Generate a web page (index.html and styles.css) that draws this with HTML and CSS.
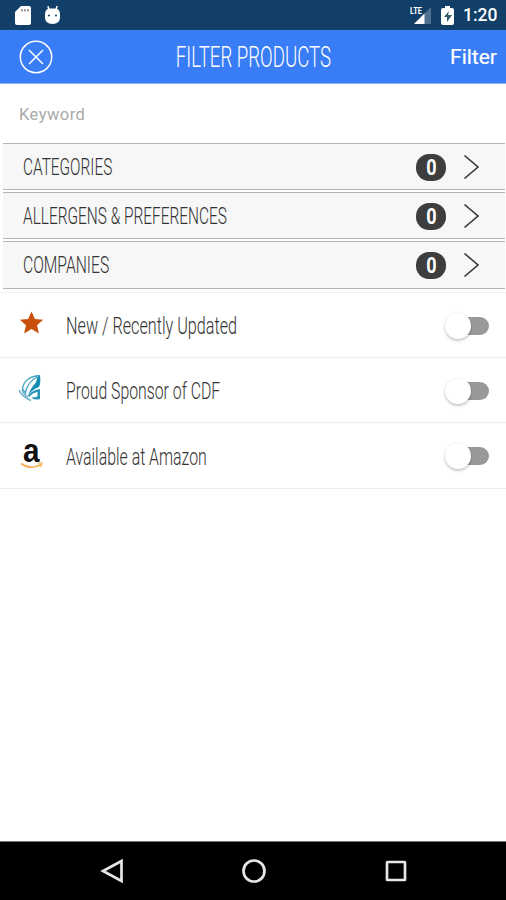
FILE: index.html
```html
<!DOCTYPE html>
<html lang="en">
<head>
<meta charset="utf-8">
<title>Filter Products</title>
<link rel="stylesheet" href="styles.css">
</head>
<body>
<div class="status">
  <svg class="sd" width="16" height="19" viewBox="0 0 16 19"><path d="M6 0h8q2 0 2 2v15q0 2-2 2H2q-2 0-2-2V6z" fill="#fff"/><path d="M7 3v2.500M10 3v2.500M13 3v2.500" stroke="#776f78" stroke-width="1.300"/></svg>
  <svg class="bot" width="17" height="19" viewBox="0 0 17 19"><path d="M4 0l1 4M13 0l-1 4" stroke="#fff" stroke-width="1.500"/><path d="M1 8.500q0-6 5-6h5q5 0 5 6v3q0 6.500-7.500 6.500T1 11.500z" fill="#fff"/><circle cx="5" cy="9.500" r="1" fill="#113f68"/><circle cx="12" cy="9.500" r="1" fill="#113f68"/></svg>
  <div class="signal"><span class="lte">LTE</span><svg width="24" height="19" viewBox="0 0 24 19"><path d="M6 18L23 1v17z" fill="#4e7190"/><path d="M6 18L16.500 7.500V18z" fill="#fff"/></svg></div>
  <svg class="battery" width="13" height="19" viewBox="0 0 13 19"><path d="M4 0h5v2h2q2 0 2 2v13q0 2-2 2H2q-2 0-2-2V4q0-2 2-2h2z" fill="#fff"/><path d="M8 5L3 11h3v5l5-7H7z" fill="#315b66"/></svg>
  <span class="clock">1:20</span>
</div>
<header class="header">
  <svg class="close" width="34" height="34" viewBox="0 0 34 34" fill="none" stroke="#fff"><circle cx="17" cy="17" r="15.700" stroke-width="1.500"/><path d="M10 10l14 14M24 10L10 24" stroke-width="1.500"/></svg>
  <h1 class="title">FILTER PRODUCTS</h1>
  <span class="apply">Filter</span>
</header>
<div class="keyword">Keyword</div>
<div class="sections">
  <div class="section"><span class="label categories">CATEGORIES</span><span class="badge"><b>0</b></span><svg class="chevron" width="17" height="26" viewBox="0 0 17 26"><path d="M1.500 1.500L15 13 1.500 24.500"/></svg></div>
  <div class="section"><span class="label allergens">ALLERGENS &amp; PREFERENCES</span><span class="badge"><b>0</b></span><svg class="chevron" width="17" height="26" viewBox="0 0 17 26"><path d="M1.500 1.500L15 13 1.500 24.500"/></svg></div>
  <div class="section"><span class="label companies">COMPANIES</span><span class="badge"><b>0</b></span><svg class="chevron" width="17" height="26" viewBox="0 0 17 26"><path d="M1.500 1.500L15 13 1.500 24.500"/></svg></div>
</div>
<div class="options">
  <div class="option">
    <svg class="icon" width="26" height="28" viewBox="0 0 26 28"><path d="M13.500 2.500l3.400 7.600 8.200.7-6.100 5.400 1.900 8.300-7.400-4.400-7.400 4.400 1.900-8.300L1.900 10.800l8.200-.7z" fill="#c8500a"/></svg>
    <span class="label recent">New / Recently Updated</span><span class="switch"></span>
  </div>
  <div class="option">
    <svg class="icon" width="26" height="28" viewBox="0 0 26 28" fill="none"><path d="M21.500 1.500C12 2 5 7 4.500 15l3 4C8.500 11 13 6 21.500 1.500z" stroke="#4ba6c6" stroke-width="1.400"/><path d="M22 1q1 8-1 12-6 2-11 8 2-5 5-9 4-4 4-8z" fill="#168eb5"/><path d="M10 21.500q4-5.500 12-6.500v10q-5 1.500-8-1l1-1q3 1 4.500-1v-4q-6 1-8 5z" fill="#2896b8"/><path d="M1 16q2 6 12 10.500M4 16q2 5 6 7" stroke="#67aec6" stroke-width="1.400"/></svg>
    <span class="label sponsor">Proud Sponsor of CDF</span><span class="switch"></span>
  </div>
  <div class="option">
    <div class="icon amazon"><b>a</b><svg width="24" height="8" viewBox="0 0 24 8"><path d="M1 1.500q10 7 20 1" fill="none" stroke="#f5ad4e" stroke-width="1.600"/><path d="M17.500 1h4.500l-1.500 4" fill="none" stroke="#f5ad4e" stroke-width="1.200"/></svg></div>
    <span class="label available">Available at Amazon</span><span class="switch"></span>
  </div>
</div>
<nav class="nav">
  <svg width="24" height="26" viewBox="0 0 24 26"><path d="M21.500 3v20L3 13z"/></svg>
  <svg width="26" height="26" viewBox="0 0 26 26"><circle cx="13" cy="13" r="10.500"/></svg>
  <svg width="24" height="24" viewBox="0 0 24 24"><rect x="3" y="3" width="18" height="18" rx="0.500"/></svg>
</nav>
</body>
</html>
```
FILE: styles.css
```css
* { box-sizing: border-box; }
body { margin: 0; width: 506px; height: 900px; display: flex; flex-direction: column; background: #fff; font-family: Roboto, sans-serif; overflow: hidden; }
svg { display: block; flex: none; }
.status { height: 30px; flex: none; display: flex; align-items: center; padding: 0 9px 0 15px; background: #113f68; color: #fff; }
.bot { margin-left: 13px; }
.signal { position: relative; margin-left: auto; margin-right: 9px; }
.lte { position: absolute; left: 2px; top: 0; font-size: 9.5px; line-height: 9px; font-weight: 700; transform: scaleX(.78); transform-origin: left; }
.clock { margin-left: 9px; font-size: 17.5px; font-weight: 500; line-height: 32px; width: 34px; white-space: nowrap; }
.header { height: 54px; flex: none; display: grid; grid-template-columns: 100px 1fr 100px; align-items: center; padding: 0 9px 0 19px; background: #397df6; border-bottom: 1px solid #8fb3fa; color: #fff; }
.title { margin: 0 9px 0 0; font-size: 29px; line-height: 53px; padding-top: 1px; font-weight: 300; text-align: center; white-space: nowrap; transform: scaleX(.643); }
.apply { font-size: 21px; font-weight: 400; -webkit-text-stroke: .2px #fff; text-align: right; line-height: 52px; }
.keyword { height: 59px; flex: none; padding-left: 19px; font-size: 16.5px; line-height: 62px; color: #aaa; letter-spacing: .45px; }
.sections { flex: none; height: 150px; padding: 0 1px 0 3px; border-bottom: 1px solid #f2f2f2; }
.section { height: 47px; margin-bottom: 2px; padding: 0 25px 0 20px; display: flex; align-items: center; background: #f7f7f7; border-top: 1px solid #b5b5b5; border-bottom: 1px solid #b5b5b5; }
.section:last-child { height: 48px; }
.label { flex: 1; white-space: nowrap; transform-origin: left; font-weight: 300; color: #333; }
.section .label { font-size: 24px; }
.badge { width: 30px; height: 27px; margin: 1px 0 0 auto; border-radius: 13px; background: #3d3d3d; color: #fff; font-size: 22px; line-height: 27px; text-align: center; }
.badge b { display: inline-block; transform: scaleX(.82); }
.chevron { margin-left: 17px; fill: none; stroke: #333; stroke-width: 1.6; }
.options { flex: 1; }
.option { height: 65px; display: flex; align-items: center; padding: 1px 17px 0 18px; border-bottom: 1px solid #eee; }
.option:last-child { height: 66px; }
.icon { width: 26px; height: 28px; margin: -6px 22px 0 0; flex: none; }
.option .label { font-size: 23px; padding-top: 2px; }
.amazon { padding-left: 5px; display: flex; flex-direction: column; color: #111; }
.amazon b { display: block; width: 18px; height: 20px; font: 700 33px/20px "Liberation Sans", sans-serif; transform: translateY(2px) scaleX(.9); transform-origin: left; }
.amazon svg { margin: 3px 0 0 -3px; }
.switch { position: relative; width: 34px; height: 18px; flex: none; border-radius: 9px; background: #999; }
.switch::before { content: ""; position: absolute; left: -10px; top: -4px; width: 26px; height: 26px; border-radius: 50%; background: #fff; box-shadow: 0 2px 3px rgba(0,0,0,.2), 0 0 2px rgba(0,0,0,.1); }
.categories { transform: scaleX(.641); }
.allergens { transform: scaleX(.643); }
.companies { transform: scaleX(.653); }
.recent { transform: scaleX(.704); }
.sponsor { transform: scaleX(.687); }
.available { transform: scaleX(.69); }
.nav { height: 59px; flex: none; display: flex; justify-content: space-between; align-items: center; padding: 0 98px 0 100px; background: #000; border-top: 1px solid #777; }
.nav svg { fill: none; stroke: #e6e6e6; stroke-width: 2.7; }
```
